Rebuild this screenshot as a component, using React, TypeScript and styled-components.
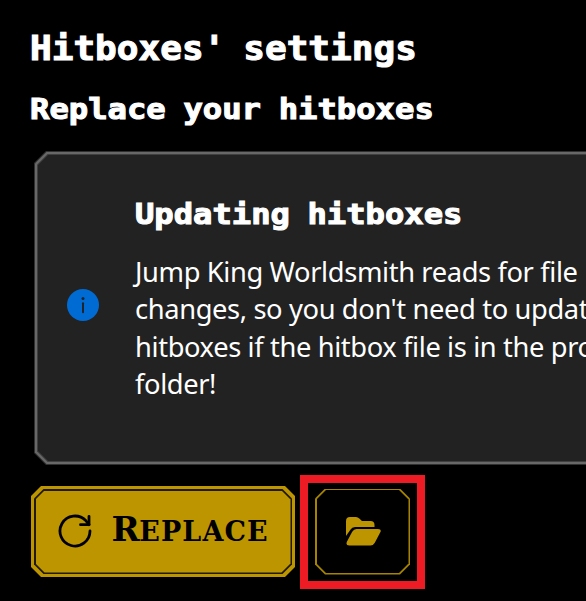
import React from "react";
import styled, { createGlobalStyle, css } from "styled-components";

const GOLD = "#bd9500";

const GlobalStyle = createGlobalStyle`
  * { box-sizing: border-box; }
  html, body { margin: 0; background: #000; overflow: hidden; }
`;

const chamfer = (n: number) => css`
  clip-path: polygon(${n}px 0, calc(100% - ${n}px) 0, 100% ${n}px, 100% calc(100% - ${n}px),
    calc(100% - ${n}px) 100%, ${n}px 100%, 0 calc(100% - ${n}px), 0 ${n}px);
`;

const Page = styled.main`
  width: 586px;
  height: 601px;
  padding: 26px 0 0 30px;
  overflow: hidden;
  background: #000;
  color: #fff;
  font-family: "Noto Sans", sans-serif;
`;

const PixelHeading = styled.h2<{ $size: number; $stretch: number; $line: number; $space: number }>`
  width: max-content;
  margin: 0;
  font: bold ${(p) => p.$size}px/${(p) => p.$line}px "DejaVu Sans Mono", monospace;
  word-spacing: ${(p) => p.$space}px;
  transform: scaleX(${(p) => p.$stretch});
  transform-origin: left center;
  -webkit-text-stroke: 1.1px #fff;
  white-space: nowrap;
`;

const Headings = styled.header`
  height: 104px;
  display: grid;
  grid-template-rows: 44px 60px;
  row-gap: 10px;
`;

const Layer = styled.span<{ $cut: number; $color: string; $inset: number }>`
  display: block;
  height: 100%;
  padding: ${(p) => p.$inset}px;
  background: ${(p) => p.$color};
  ${(p) => chamfer(p.$cut)}
`;

const Card = styled.section`
  width: 700px;
  height: 314px;
  margin: 21px 0 21px 4px;
`;

const CardBody = styled.div`
  display: flex;
  align-items: center;
  height: 100%;
  padding-left: 29px;
`;

const InfoIcon = styled.svg`
  flex: none;
  width: 32px;
  height: 32px;
  margin: 0 36px 6px 0;
`;

const Copy = styled.div`
  padding-bottom: 20px;
`;

const Message = styled.p`
  margin: 17px 0 0;
  font: 27.3px/37.3px "Noto Sans", sans-serif;
  letter-spacing: -0.38px;
  white-space: nowrap;
`;

const MessageLine = styled.span`
  display: block;
`;

const Actions = styled.div`
  display: flex;
  align-items: center;
  gap: 5px;
  height: 91px;
  margin-left: 1px;
`;

const Button = styled.button<{ $width: number; $height: number }>`
  flex: none;
  width: ${(p) => p.$width}px;
  height: ${(p) => p.$height}px;
  padding: 0;
  border: 0;
  background: transparent;
`;

const ButtonBody = styled.span`
  display: flex;
  align-items: center;
  height: 100%;
  padding-left: 22px;
  color: #000;
`;

const ReloadIcon = styled.svg`
  flex: none;
  width: 34px;
  height: 34px;
  margin-bottom: 2px;
`;

const ButtonLabel = styled.span`
  margin: 0 0 2px 20px;
  font: bold 27px/40px "DejaVu Serif", serif;
  letter-spacing: 1.1px;
  white-space: nowrap;
`;

const Initial = styled.span`
  font-size: 34px;
  letter-spacing: -0.5px;
`;

const Highlight = styled.div`
  display: flex;
  align-items: center;
  justify-content: center;
  flex: none;
  width: 125px;
  height: 114px;
  margin-top: 1px;
  border: 8px solid #ed1c24;
`;

const FolderButton = styled(Button)`
  margin-bottom: 1px;
`;

const FolderBody = styled.span`
  display: flex;
  align-items: center;
  justify-content: center;
  height: 100%;
  padding-left: 1px;
`;

export default function App() {
  return (
    <>
      <GlobalStyle />
      <Page>
        <Headings>
          <PixelHeading as="h1" $size={34} $stretch={1.06} $space={-3.5} $line={44}>
            Hitboxes' settings
          </PixelHeading>
          <PixelHeading $size={28.5} $stretch={1.13} $space={-1.5} $line={60}>
            Replace your hitboxes
          </PixelHeading>
        </Headings>

        <Card>
          <Layer as="div" $cut={12} $color="#303030" $inset={1}>
            <Layer as="div" $cut={11.5} $color="#686868" $inset={2}>
              <Layer as="div" $cut={10.5} $color="#404040" $inset={1}>
                <Layer as="div" $cut={10} $color="#222222" $inset={0}>
                  <CardBody>
                    <InfoIcon viewBox="0 0 32 32">
                      <circle cx="16" cy="16" r="16" fill="#006bd3" />
                      <circle cx="16" cy="9.6" r="1.5" fill="#202329" />
                      <path d="M16 14.2V23.3" stroke="#202329" strokeWidth="2" strokeLinecap="round" />
                    </InfoIcon>
                    <Copy>
                      <PixelHeading as="h3" $size={28.5} $stretch={1.128} $space={-1.5} $line={42}>
                        Updating hitboxes
                      </PixelHeading>
                      <Message>
                        <MessageLine>Jump King Worldsmith reads for file</MessageLine>
                        <MessageLine>changes, so you don't need to update</MessageLine>
                        <MessageLine>hitboxes if the hitbox file is in the project</MessageLine>
                        <MessageLine>folder!</MessageLine>
                      </Message>
                    </Copy>
                  </CardBody>
                </Layer>
              </Layer>
            </Layer>
          </Layer>
        </Card>

        <Actions>
          <Button $width={264} $height={91}>
            <Layer $cut={10} $color={GOLD} $inset={3}>
              <Layer $cut={9.5} $color="#211a00" $inset={1.5}>
                <Layer $cut={9} $color={GOLD} $inset={0}>
                  <ButtonBody>
                    <ReloadIcon viewBox="0 0 34 34" fill="none" stroke="#000" strokeWidth="2.8" strokeLinecap="round" strokeLinejoin="round">
                      <path d="M32 17A15 15 0 1 1 27.7 6.5L31 10.7" />
                      <path d="M31 2.3V10.7H22.5" />
                    </ReloadIcon>
                    <ButtonLabel>
                      <Initial>R</Initial>EPLACE
                    </ButtonLabel>
                  </ButtonBody>
                </Layer>
              </Layer>
            </Layer>
          </Button>
          <Highlight>
            <FolderButton $width={95} $height={86}>
              <Layer $cut={10} $color="#a78400" $inset={1.5}>
                <Layer $cut={9.5} $color="#000" $inset={0}>
                  <FolderBody>
                    <svg width="35" height="29" viewBox="0 0 35 29" fill={GOLD}>
                      <path d="M0 19V4Q0 0 4 0H10Q12 0 13.3 1.5L16 4H24.5Q28.5 4 28.5 8V10H9Q6 10 4.4 12.8Z" />
                      <path d="M10.5 12H32Q36 12 34.3 15.3L28.8 25.8Q27.4 28.5 24.5 28.5H3.2Q-.8 28.5 1 24.5L6.2 14.8Q7.8 12 10.5 12Z" />
                    </svg>
                  </FolderBody>
                </Layer>
              </Layer>
            </FolderButton>
          </Highlight>
        </Actions>
      </Page>
    </>
  );
}
